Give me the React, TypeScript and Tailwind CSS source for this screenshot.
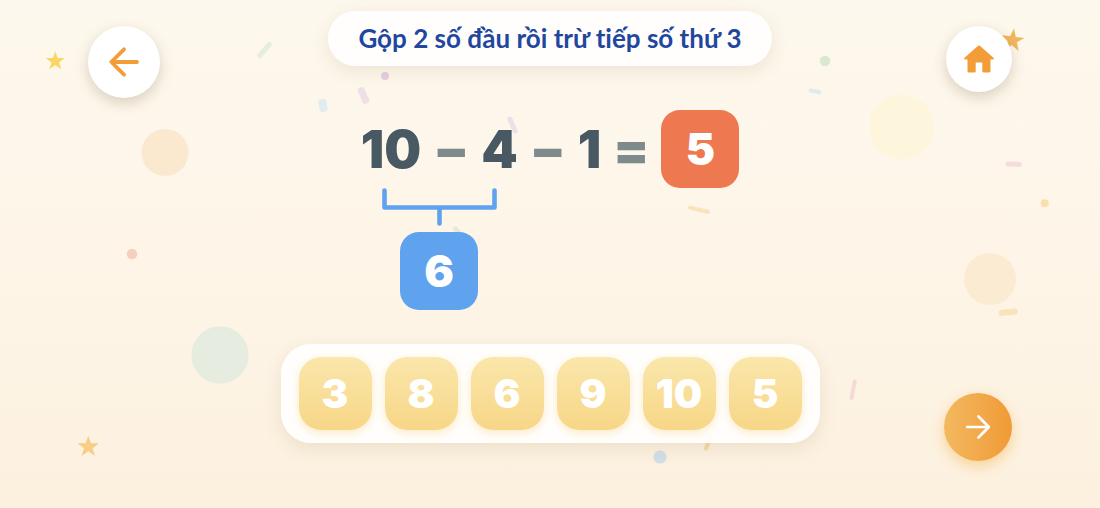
import * as React from "react";
import { clsx } from "clsx";

const CHOICES = [3, 8, 6, 9, 10, 5];

const STAR = "M0 -10 L2.35 -3.1 L9.6 -3.1 L3.8 1.2 L6 8.1 L0 4 L-6 8.1 L-3.8 1.2 L-9.6 -3.1 L-2.35 -3.1 Z";

const CIRCLES = [
  { x: 165, y: 152.5, r: 23.5, fill: "#fae9cf" },
  { x: 901.5, y: 127, r: 32.5, fill: "#fdf6dc" },
  { x: 990, y: 279, r: 26, fill: "#faebd2" },
  { x: 220, y: 355, r: 28.7, fill: "#e7ece0" },
  { x: 385, y: 76, r: 4, fill: "#e5cee1" },
  { x: 825, y: 61, r: 5.2, fill: "#dbe8d1" },
  { x: 1044.7, y: 203.3, r: 4, fill: "#f9deb0" },
  { x: 132, y: 254, r: 5.3, fill: "#f7cfbe" },
  { x: 660, y: 457, r: 6.6, fill: "#d2dfe6" },
];

// confetti strips: centre, length, thickness, rotation
const STRIPS = [
  { x: 264.5, y: 50, w: 20, h: 5, a: -49, fill: "#e6eddc" },
  { x: 323, y: 105.5, w: 8, h: 13, a: -10, fill: "#e1edec" },
  { x: 363.5, y: 95.5, w: 7, h: 17, a: -24, fill: "#efdfe6" },
  { x: 512.5, y: 125, w: 5, h: 18, a: -23, fill: "#efdfe6" },
  { x: 815, y: 91.3, w: 13, h: 4, a: 11, fill: "#deebec" },
  { x: 1013.7, y: 164.2, w: 16, h: 5, a: 2, fill: "#f7dcdc" },
  { x: 699, y: 209.7, w: 22.5, h: 4, a: 13, fill: "#f9e3ba" },
  { x: 1008.2, y: 312.3, w: 19, h: 6, a: -6, fill: "#f9e3ba" },
  { x: 853.2, y: 389.7, w: 4, h: 21, a: 11, fill: "#f6dad5" },
  { x: 708.5, y: 442, w: 4, h: 18, a: 21, fill: "#f6d9a5" },
  { x: 459, y: 233, w: 5, h: 16, a: -42, fill: "#e6ebd6" },
];

const STARS = [
  { x: 55.3, y: 61.2, s: 1, a: 0, fill: "#fad666" },
  { x: 1012.5, y: 40.3, s: 1.22, a: 7, fill: "#f2b75d" },
  { x: 88.3, y: 446.8, s: 1.13, a: 0, fill: "#f8cd85" },
  { x: 550, y: 25, s: 0.6, a: 0, fill: "#fbe7a5" },
];

function Confetti() {
  return (
    <svg
      className="pointer-events-none absolute inset-0 -z-10 h-full w-full"
      viewBox="0 0 1100 508"
      preserveAspectRatio="xMidYMid slice"
      aria-hidden="true"
    >
      {CIRCLES.map((c, i) => (
        <circle key={i} cx={c.x} cy={c.y} r={c.r} fill={c.fill} />
      ))}
      {STRIPS.map((s, i) => (
        <rect
          key={i}
          x={-s.w / 2}
          y={-s.h / 2}
          width={s.w}
          height={s.h}
          rx={2.4}
          fill={s.fill}
          transform={`translate(${s.x} ${s.y}) rotate(${s.a})`}
        />
      ))}
      {STARS.map((s, i) => (
        <path key={i} d={STAR} fill={s.fill} transform={`translate(${s.x} ${s.y}) rotate(${s.a}) scale(${s.s})`} />
      ))}
    </svg>
  );
}

function Operator({ children }: { children: React.ReactNode }) {
  return <span className="text-[#7f8a8d]">{children}</span>;
}

function AnswerBox({ value, tone }: { value: number; tone: "blue" | "orange" }) {
  return (
    <span
      className={clsx(
        "flex size-[78px] items-center justify-center rounded-[19px] text-[44px] leading-none font-black text-white",
        tone === "blue" ? "bg-[#5fa3ef]" : "bg-[#ee7850]"
      )}
    >
      {value}
    </span>
  );
}

function Bracket() {
  return (
    <svg className="-mt-0.5 h-[38px] w-[115px]" viewBox="0 0 115 38" fill="none" aria-hidden="true">
      <path
        d="M2.5 2.5V19.5H112.5V2.5M57.5 19.5V35.5"
        stroke="#5fa3ef"
        strokeWidth="4.6"
        strokeLinecap="round"
        strokeLinejoin="round"
      />
    </svg>
  );
}

export default function App() {
  const [picked, setPicked] = React.useState<number | null>(null);

  return (
    <main className="relative isolate flex min-h-screen flex-col overflow-hidden bg-linear-to-b from-[#fdf8ed] via-[#fef5e8] to-[#fcf1df] font-['Inter',sans-serif]">
      <Confetti />

      <header className="grid grid-cols-[1fr_auto_1fr] items-start px-[88px]">
        <button
          type="button"
          aria-label="Quay lại"
          className="mt-[26px] flex size-[72px] items-center justify-center rounded-full bg-white shadow-[0_5px_14px_rgba(90,70,30,0.22)]"
        >
          <svg className="size-[30px]" viewBox="0 0 30 30" fill="none" aria-hidden="true">
            <path
              d="M28 15H2.5M15 2.3L2.3 15L15 27.7"
              stroke="#f29d38"
              strokeWidth="3.8"
              strokeLinecap="round"
              strokeLinejoin="round"
            />
          </svg>
        </button>

        <h1 className="mt-[11px] rounded-full bg-white/90 px-[30px] py-3 font-['Lato',sans-serif] text-[26px] leading-[31px] font-bold text-[#1f479e] shadow-[0_5px_18px_rgba(120,90,40,0.12)] [font-variant-ligatures:none]">
          Gộp 2 số đầu rồi trừ tiếp số thứ 3
        </h1>

        <button
          type="button"
          aria-label="Trang chủ"
          className="mt-[26px] flex size-[66px] items-center justify-center justify-self-end rounded-full bg-white shadow-[0_5px_14px_rgba(90,70,30,0.22)]"
        >
          <svg className="h-7 w-[30px]" viewBox="0 0 30 28" fill="#f29d38" aria-hidden="true">
            <path d="M14.1 .8Q15 0 15.9 .8L29.7 13Q30.4 14.5 29 14.5H26.5V26Q26.5 27.5 25 27.5H19.8Q18.3 27.5 18.3 26V17.5H11.7V26Q11.7 27.5 10.2 27.5H5Q3.5 27.5 3.5 26V14.5H1Q-.4 14.5 .3 13Z" />
          </svg>
        </button>
      </header>

      <section className="mt-3 flex items-start justify-center gap-3 text-[52px] leading-[80px] font-black text-[#485963]">
        <div className="flex flex-col items-center">
          <div className="flex gap-3">
            <span>10</span>
            <Operator>−</Operator>
            <span>4</span>
          </div>
          <Bracket />
          <div className="mt-[6px]">
            <AnswerBox value={6} tone="blue" />
          </div>
        </div>
        <Operator>−</Operator>
        <span>1</span>
        <Operator>=</Operator>
        <AnswerBox value={5} tone="orange" />
      </section>

      <footer className="mt-[34px] grid grid-cols-[1fr_auto_1fr] items-start px-[88px] pb-8">
        <div className="col-start-2 flex gap-[13px] rounded-[30px] bg-white/90 px-[18px] py-[13px] shadow-[0_6px_18px_rgba(120,90,40,0.12)]">
          {CHOICES.map((n) => (
            <button
              key={n}
              type="button"
              aria-pressed={picked === n}
              onClick={() => setPicked(n)}
              className="size-[73px] rounded-[22px] bg-linear-to-b from-[#fae7ab] to-[#f7d687] text-[40px] leading-none font-black text-white shadow-[0_3px_8px_rgba(247,205,120,0.4)]"
            >
              {n}
            </button>
          ))}
        </div>

        <button
          type="button"
          aria-label="Tiếp theo"
          className="mt-[49px] flex size-[68px] items-center justify-center justify-self-end rounded-full bg-linear-to-r from-[#f3b95f] to-[#f09a35] shadow-[0_5px_14px_rgba(243,170,60,0.45)]"
        >
          <svg className="size-6" viewBox="0 0 24 24" fill="none" aria-hidden="true">
            <path
              d="M1.3 12H22.5M12.5 1.5L22.8 12L12.5 22.5"
              stroke="white"
              strokeWidth="2.7"
              strokeLinecap="round"
              strokeLinejoin="round"
            />
          </svg>
        </button>
      </footer>
    </main>
  );
}
